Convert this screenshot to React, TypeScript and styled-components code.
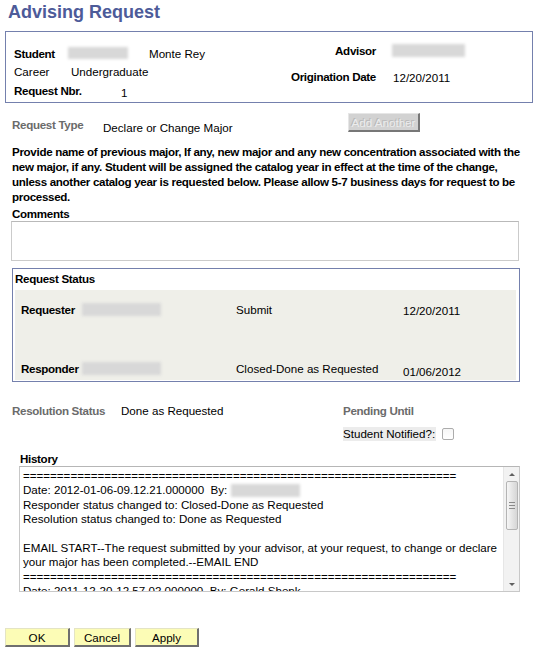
import React from 'react';
import styled, { createGlobalStyle } from 'styled-components';

const BASE_SIZE = '11.6px';
const BOLD_SPACING = '-0.32px';

const GlobalStyle = createGlobalStyle`
  body {
    margin: 0;
    background: #fff;
    font-family: "Liberation Sans", Arial, sans-serif;
    font-size: ${BASE_SIZE};
    color: #000;
  }
`;

const Page = styled.div`
  width: 540px;
`;

const Title = styled.h1`
  margin: 0 0 0 8px;
  font-size: 18px;
  font-weight: bold;
  line-height: 24px;
  color: #4d5b99;
`;

const InfoBox = styled.div`
  margin: 7px 0 0 5px;
  width: 528px;
  height: 72px;
  box-sizing: border-box;
  border: 1px solid #7480ad;
  display: flex;
`;

const InfoColumn = styled.div<{ $width?: number; $top: number; $left?: number }>`
  display: flex;
  flex-direction: column;
  width: ${(p) => (p.$width ? `${p.$width}px` : 'auto')};
  flex: ${(p) => (p.$width ? '0 0 auto' : '1')};
  padding-top: ${(p) => p.$top}px;
  padding-left: ${(p) => p.$left ?? 0}px;
  box-sizing: border-box;
`;

const InfoRow = styled.div<{ $height: number }>`
  display: flex;
  align-items: center;
  height: ${(p) => p.$height}px;
`;

const FieldLabel = styled.span<{ $width: number; $right?: boolean }>`
  flex: 0 0 auto;
  width: ${(p) => p.$width}px;
  font-weight: bold;
  letter-spacing: ${BOLD_SPACING};
  text-align: ${(p) => (p.$right ? 'right' : 'left')};
  white-space: nowrap;
`;

const PlainLabel = styled.span<{ $width: number }>`
  flex: 0 0 auto;
  width: ${(p) => p.$width}px;
`;

const Value = styled.span<{ $shift?: number; $gap?: number }>`
  padding-top: ${(p) => p.$shift ?? 0}px;
  margin-left: ${(p) => p.$gap ?? 0}px;
  white-space: nowrap;
`;

const Redacted = styled.span<{ $width: number; $height?: number; $gap?: number }>`
  display: inline-block;
  flex: 0 0 auto;
  width: ${(p) => p.$width}px;
  height: ${(p) => p.$height ?? 12}px;
  margin-left: ${(p) => p.$gap ?? 0}px;
  background: #d8d8d8;
  filter: blur(1.5px);
  vertical-align: middle;
`;

const RequestTypeRow = styled.div`
  display: flex;
  align-items: flex-start;
  height: 19px;
  margin-top: 10px;
  padding-left: 12px;
`;

const TypeLabel = styled.span`
  width: 91px;
  flex: 0 0 auto;
  line-height: 19px;
  padding-top: 2px;
  font-weight: bold;
  letter-spacing: ${BOLD_SPACING};
  color: #6b6b6b;
`;

const TypeValue = styled.span`
  width: 245px;
  flex: 0 0 auto;
  line-height: 19px;
  padding-top: 5px;
`;

const DisabledButton = styled.button`
  width: 72px;
  height: 19px;
  box-sizing: border-box;
  padding: 0;
  font-family: inherit;
  font-size: ${BASE_SIZE};
  color: #ececec;
  text-shadow: -1px -1px 0 #b8b8b8;
  background: #d2d2d2;
  border-top: 1px solid #e6e6e6;
  border-left: 1px solid #e6e6e6;
  border-right: 2px solid #777;
  border-bottom: 2px solid #777;
`;

const Instructions = styled.p`
  margin: 12px 0 0;
  padding-left: 12px;
  width: 530px;
  box-sizing: border-box;
  line-height: 15px;
  font-weight: bold;
  letter-spacing: ${BOLD_SPACING};
`;

const SectionLabel = styled.div<{ $left: number; $top: number; $line: number }>`
  padding-left: ${(p) => p.$left}px;
  margin-top: ${(p) => p.$top}px;
  line-height: ${(p) => p.$line}px;
  font-weight: bold;
  letter-spacing: ${BOLD_SPACING};
`;

const CommentsBox = styled.div`
  margin-left: 11px;
  width: 508px;
  height: 40px;
  box-sizing: border-box;
  border: 1px solid #cbcbcb;
  border-top-color: #b9b9b9;
`;

const StatusBox = styled.div`
  margin: 7px 0 0 12px;
  width: 508px;
  height: 114px;
  box-sizing: border-box;
  border: 1px solid #7480ad;
  display: flex;
  flex-direction: column;
`;

const StatusHeader = styled.div`
  height: 21px;
  line-height: 19px;
  padding-left: 2px;
  font-weight: bold;
  letter-spacing: ${BOLD_SPACING};
`;

const StatusPanel = styled.div`
  margin: 0 3px 0 2px;
  height: 90px;
  box-sizing: border-box;
  background: #efefe9;
  padding: 10px 0 0 6px;
  display: grid;
  grid-template-columns: 61px 154px 167px auto;
  grid-template-rows: 18px 18px;
  row-gap: 41px;
  align-items: center;
`;

const Cell = styled.div<{ $shift?: number; $bold?: boolean }>`
  display: flex;
  align-items: center;
  height: 18px;
  padding-top: ${(p) => p.$shift ?? 0}px;
  font-weight: ${(p) => (p.$bold ? 'bold' : 'normal')};
  letter-spacing: ${(p) => (p.$bold ? BOLD_SPACING : 'normal')};
  white-space: nowrap;
`;

const ResolutionGrid = styled.div`
  margin-top: 19px;
  padding-left: 12px;
  display: grid;
  grid-template-columns: 109px 222px auto;
  grid-template-rows: 18px 16px;
  row-gap: 7px;
  align-items: center;
`;

const MutedText = styled.div`
  font-weight: bold;
  letter-spacing: ${BOLD_SPACING};
  color: #6b6b6b;
  white-space: nowrap;
`;

const NotifiedGroup = styled.div`
  grid-column: 3;
  display: flex;
  align-items: center;
`;

const NotifiedLabel = styled.span`
  background: #ececec;
  line-height: 14px;
  padding-right: 1px;
`;

const CheckBox = styled.span`
  width: 12px;
  height: 12px;
  margin-left: 6px;
  box-sizing: border-box;
  border: 1px solid #acacac;
  border-radius: 2px;
  background: linear-gradient(#f6f6f6, #ffffff);
`;

const HistoryBox = styled.div`
  margin-left: 19px;
  width: 501px;
  height: 126px;
  box-sizing: border-box;
  border: 1px solid #c8c8c8;
  border-top-color: #b6b6b6;
  display: flex;
`;

const HistoryText = styled.div`
  flex: 1;
  padding: 2px 0 0 3px;
  overflow: hidden;
  line-height: 14.4px;
`;

const HistoryLine = styled.div`
  height: 14.4px;
  white-space: pre;
  display: flex;
  align-items: center;
`;

const Scrollbar = styled.div`
  width: 15px;
  flex: 0 0 auto;
  background: #f2f2f2;
  border-left: 1px solid #e6e6e6;
  display: flex;
  flex-direction: column;
  align-items: center;
`;

const Arrow = styled.span<{ $down?: boolean }>`
  width: 0;
  height: 0;
  margin: ${(p) => (p.$down ? 'auto 0 5px' : '6px 0 5px')};
  border-left: 3px solid transparent;
  border-right: 3px solid transparent;
  ${(p) =>
    p.$down ? 'border-top: 3px solid #606060;' : 'border-bottom: 3px solid #606060;'}
`;

const Thumb = styled.div`
  width: 12px;
  height: 49px;
  box-sizing: border-box;
  border: 1px solid #b4b4b4;
  border-radius: 2px;
  background: linear-gradient(to right, #f6f6f6, #e2e2e2 60%, #d6d6d6);
  display: flex;
  flex-direction: column;
  align-items: center;
  justify-content: center;
  gap: 2px;
`;

const Grip = styled.span`
  width: 6px;
  height: 1px;
  background: #8a8a8a;
`;

const ButtonBar = styled.div`
  margin-top: 36px;
  padding-left: 5px;
  display: flex;
  gap: 4px;
`;

const ActionButton = styled.button<{ $width: number }>`
  width: ${(p) => p.$width}px;
  height: 19px;
  box-sizing: border-box;
  padding: 0;
  font-family: inherit;
  font-size: ${BASE_SIZE};
  color: #000;
  background: #fcfcb6;
  border-top: 1px solid #e4e4c4;
  border-left: 1px solid #e4e4c4;
  border-right: 2px solid #6f6f6f;
  border-bottom: 2px solid #6f6f6f;
`;

const RULE = '='.repeat(64);

export default function App() {
  return (
    <Page>
      <GlobalStyle />
      <Title>Advising Request</Title>

      <InfoBox>
        <InfoColumn $width={260} $top={12} $left={8}>
          <InfoRow $height={18}>
            <FieldLabel $width={54}>Student</FieldLabel>
            <Redacted $width={60} />
            <Value $gap={21}>Monte Rey</Value>
          </InfoRow>
          <InfoRow $height={19}>
            <PlainLabel $width={57}>Career</PlainLabel>
            <Value>Undergraduate</Value>
          </InfoRow>
          <InfoRow $height={18}>
            <FieldLabel $width={107}>Request Nbr.</FieldLabel>
            <Value $shift={4}>1</Value>
          </InfoRow>
        </InfoColumn>
        <InfoColumn $top={5}>
          <InfoRow $height={26}>
            <FieldLabel $width={110} $right>
              Advisor
            </FieldLabel>
            <Redacted $width={73} $height={13} $gap={16} />
          </InfoRow>
          <InfoRow $height={26}>
            <FieldLabel $width={110} $right>
              Origination Date
            </FieldLabel>
            <Value $gap={17} $shift={2}>
              12/20/2011
            </Value>
          </InfoRow>
        </InfoColumn>
      </InfoBox>

      <RequestTypeRow>
        <TypeLabel>Request Type</TypeLabel>
        <TypeValue>Declare or Change Major</TypeValue>
        <DisabledButton disabled>Add Another</DisabledButton>
      </RequestTypeRow>

      <Instructions>
        Provide name of previous major, If any, new major and any new concentration associated with
        the new major, if any. Student will be assigned the catalog year in effect at the time of the
        change, unless another catalog year is requested below. Please allow 5-7 business days for
        request to be processed.
      </Instructions>

      <SectionLabel $left={12} $top={2} $line={15}>
        Comments
      </SectionLabel>
      <CommentsBox />

      <StatusBox>
        <StatusHeader>Request Status</StatusHeader>
        <StatusPanel>
          <Cell $bold>Requester</Cell>
          <Cell>
            <Redacted $width={79} $height={13} />
          </Cell>
          <Cell>Submit</Cell>
          <Cell $shift={3}>12/20/2011</Cell>

          <Cell $bold>Responder</Cell>
          <Cell>
            <Redacted $width={79} $height={13} />
          </Cell>
          <Cell>Closed-Done as Requested</Cell>
          <Cell $shift={6}>01/06/2012</Cell>
        </StatusPanel>
      </StatusBox>

      <ResolutionGrid>
        <MutedText>Resolution Status</MutedText>
        <div>Done as Requested</div>
        <MutedText>Pending Until</MutedText>
        <NotifiedGroup>
          <NotifiedLabel>Student Notified?:</NotifiedLabel>
          <CheckBox />
        </NotifiedGroup>
      </ResolutionGrid>

      <SectionLabel $left={20} $top={10} $line={14}>
        History
      </SectionLabel>
      <HistoryBox>
        <HistoryText>
          <HistoryLine>{RULE}</HistoryLine>
          <HistoryLine>
            {'Date: 2012-01-06-09.12.21.000000  By: '}
            <Redacted $width={69} $height={13} />
          </HistoryLine>
          <HistoryLine>Responder status changed to: Closed-Done as Requested</HistoryLine>
          <HistoryLine>Resolution status changed to: Done as Requested</HistoryLine>
          <HistoryLine> </HistoryLine>
          <HistoryLine>
            EMAIL START--The request submitted by your advisor, at your request, to change or declare
          </HistoryLine>
          <HistoryLine>your major has been completed.--EMAIL END</HistoryLine>
          <HistoryLine>{RULE}</HistoryLine>
          <HistoryLine>{'Date: 2011-12-20-12.57.02.000000  By: Gerald Shenk'}</HistoryLine>
        </HistoryText>
        <Scrollbar>
          <Arrow />
          <Thumb>
            <Grip />
            <Grip />
            <Grip />
          </Thumb>
          <Arrow $down />
        </Scrollbar>
      </HistoryBox>

      <ButtonBar>
        <ActionButton $width={65}>OK</ActionButton>
        <ActionButton $width={57}>Cancel</ActionButton>
        <ActionButton $width={64}>Apply</ActionButton>
      </ButtonBar>
    </Page>
  );
}
